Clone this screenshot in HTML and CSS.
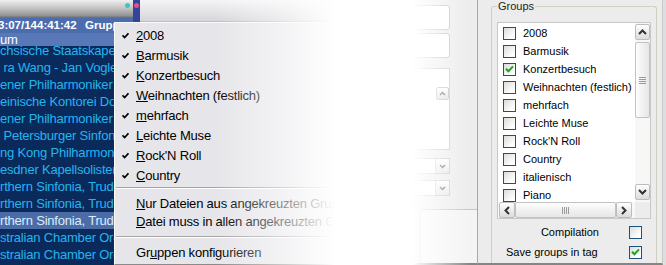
FILE: index.html
```html
<!DOCTYPE html>
<html lang="de">
<head>
    <meta charset="UTF-8">
    <title>Gruppen</title>
    <link rel="stylesheet" href="styles.css">
</head>
<body>
    <!-- Player playlist (left) -->
    <div class="player">
        <div class="player-main">
            <div class="titlebar"><span class="led led-cyan"></span></div>
            <div class="col-head"><span class="col-time">3:07/144:41:42</span><span>Gruppe</span></div>
            <div class="row-current">um</div>
            <ul class="tracks">
                <li>chsische Staatskapelle Dresden</li>
                <li>&nbsp;ra Wang - Jan Vogler</li>
                <li>ener Philharmoniker</li>
                <li>einische Kontorei Dormagen</li>
                <li>ener Philharmoniker</li>
                <li>&nbsp;Petersburger Sinfonieorchester</li>
                <li>ng Kong Philharmonic</li>
                <li>esdner Kapellsolisten</li>
                <li>rthern Sinfonia, Trude</li>
                <li>rthern Sinfonia, Trude</li>
                <li class="selected">rthern Sinfonia, Trude</li>
                <li>stralian Chamber Orchestra</li>
                <li>stralian Chamber Orchestra</li>
            </ul>
        </div>
        <div class="player-edge"><span class="led led-pink"></span></div>
    </div>

    <div class="canvas">
        <div class="toolbar"></div>
        <div class="canvas-body"></div>
    </div>

    <!-- Tag editor controls behind the fade -->
    <div class="controls">
        <div class="field"></div>
        <div class="field"></div>
        <div class="faint-list">
            <div class="faint-scroll">
                <span class="scroll-btn small">
                    <svg width="7" height="5" viewBox="0 0 7 5"><path d="M1 4 3.5 1.5 6 4" fill="none" stroke="#666" stroke-width="1.5"/></svg>
                </span>
            </div>
        </div>
        <div class="combo"><span class="combo-btn"><svg width="7" height="5" viewBox="0 0 7 5"><path d="M1 1 3.5 3.5 6 1" fill="none" stroke="#666" stroke-width="1.5"/></svg></span></div>
        <div class="combo"><span class="combo-btn"><svg width="7" height="5" viewBox="0 0 7 5"><path d="M1 1 3.5 3.5 6 1" fill="none" stroke="#666" stroke-width="1.5"/></svg></span></div>
        <div class="faint-panel"></div>
    </div>

    <div class="settings">
        <fieldset class="groups">
            <legend>Groups</legend>
            <div class="listbox">
                <ul class="group-list">
                    <li><span class="checkbox"></span>2008</li>
                    <li><span class="checkbox"></span>Barmusik</li>
                    <li><span class="checkbox checked"><svg width="9" height="8" viewBox="0 0 9 8"><path d="M1 3.8 3.4 6.2 8 1.4" fill="none" stroke="#21a121" stroke-width="2"/></svg></span>Konzertbesuch</li>
                    <li><span class="checkbox"></span>Weihnachten (festlich)</li>
                    <li><span class="checkbox"></span>mehrfach</li>
                    <li><span class="checkbox"></span>Leichte Muse</li>
                    <li><span class="checkbox"></span>Rock'N Roll</li>
                    <li><span class="checkbox"></span>Country</li>
                    <li><span class="checkbox"></span>italienisch</li>
                    <li><span class="checkbox"></span>Piano</li>
                </ul>
                <div class="vscroll">
                    <span class="scroll-btn">
                        <svg width="9" height="6" viewBox="0 0 9 6"><path d="M1 5 4.5 1.5 8 5" fill="none" stroke="#333" stroke-width="2"/></svg>
                    </span>
                    <div class="vtrack">
                        <div class="thumb thumb-v"><span class="grip-v"></span></div>
                    </div>
                    <span class="scroll-btn">
                        <svg width="9" height="6" viewBox="0 0 9 6"><path d="M1 1 4.5 4.5 8 1" fill="none" stroke="#333" stroke-width="2"/></svg>
                    </span>
                </div>
                <div class="hscroll">
                    <span class="scroll-btn">
                        <svg width="6" height="9" viewBox="0 0 6 9"><path d="M5 1 1.5 4.5 5 8" fill="none" stroke="#333" stroke-width="2"/></svg>
                    </span>
                    <div class="thumb thumb-h"><span class="grip-h"></span></div>
                    <span class="scroll-btn">
                        <svg width="6" height="9" viewBox="0 0 6 9"><path d="M1 1 4.5 4.5 1 8" fill="none" stroke="#333" stroke-width="2"/></svg>
                    </span>
                </div>
                <div class="corner"></div>
            </div>
            <div class="option option-right">Compilation<span class="checkbox"></span></div>
            <div class="option">Save groups in tag<span class="checkbox checked push"><svg width="9" height="8" viewBox="0 0 9 8"><path d="M1 3.8 3.4 6.2 8 1.4" fill="none" stroke="#21a121" stroke-width="2"/></svg></span></div>
        </fieldset>
    </div>

    <!-- Context menu over the playlist -->
    <div class="menu">
        <div class="menu-item"><span class="check"><svg width="7" height="7" viewBox="0 0 7 7"><path d="M0.5 3.2 2.6 5.5 6.5 1.2" fill="none" stroke="#000" stroke-width="1.7"/></svg></span><span><u>2</u>008</span></div>
        <div class="menu-item"><span class="check"><svg width="7" height="7" viewBox="0 0 7 7"><path d="M0.5 3.2 2.6 5.5 6.5 1.2" fill="none" stroke="#000" stroke-width="1.7"/></svg></span><span><u>B</u>armusik</span></div>
        <div class="menu-item"><span class="check"><svg width="7" height="7" viewBox="0 0 7 7"><path d="M0.5 3.2 2.6 5.5 6.5 1.2" fill="none" stroke="#000" stroke-width="1.7"/></svg></span><span><u>K</u>onzertbesuch</span></div>
        <div class="menu-item"><span class="check"><svg width="7" height="7" viewBox="0 0 7 7"><path d="M0.5 3.2 2.6 5.5 6.5 1.2" fill="none" stroke="#000" stroke-width="1.7"/></svg></span><span><u>W</u>eihnachten (festlich)</span></div>
        <div class="menu-item"><span class="check"><svg width="7" height="7" viewBox="0 0 7 7"><path d="M0.5 3.2 2.6 5.5 6.5 1.2" fill="none" stroke="#000" stroke-width="1.7"/></svg></span><span><u>m</u>ehrfach</span></div>
        <div class="menu-item"><span class="check"><svg width="7" height="7" viewBox="0 0 7 7"><path d="M0.5 3.2 2.6 5.5 6.5 1.2" fill="none" stroke="#000" stroke-width="1.7"/></svg></span><span><u>L</u>eichte Muse</span></div>
        <div class="menu-item"><span class="check"><svg width="7" height="7" viewBox="0 0 7 7"><path d="M0.5 3.2 2.6 5.5 6.5 1.2" fill="none" stroke="#000" stroke-width="1.7"/></svg></span><span><u>R</u>ock'N Roll</span></div>
        <div class="menu-item"><span class="check"><svg width="7" height="7" viewBox="0 0 7 7"><path d="M0.5 3.2 2.6 5.5 6.5 1.2" fill="none" stroke="#000" stroke-width="1.7"/></svg></span><span><u>C</u>ountry</span></div>
        <div class="menu-sep"></div>
        <div class="menu-item plain"><span class="check"></span><span><u>N</u>ur Dateien aus angekreuzten Gruppen anzeigen</span></div>
        <div class="menu-item plain"><span class="check"></span><span><u>D</u>atei muss in allen angekreuzten Gruppen sein</span></div>
        <div class="menu-sep wide"></div>
        <div class="menu-item plain"><span class="check"></span><span>Gr<u>u</u>ppen konfigurieren</span></div>
    </div>

    <div class="fade"></div>
</body>
</html>
```

FILE: styles.css
```css
body {
    margin: 0;
    width: 666px;
    height: 265px;
    overflow: hidden;
    position: relative;
    display: flex;
    background-color: #dedede;
    font-family: "Liberation Sans", Arial, sans-serif;
}

/* Playlist */
.player {
    width: 140px;
    display: flex;
    flex-shrink: 0;
}

.player-main {
    width: 133px;
    display: flex;
    flex-direction: column;
    background-color: #0b2a5c;
    overflow: hidden;
}

.player-edge {
    width: 7px;
    background-color: #34449a;
    display: flex;
    justify-content: center;
    align-items: flex-start;
    padding-top: 3px;
    box-sizing: border-box;
}

.titlebar {
    height: 18px;
    flex-shrink: 0;
    display: flex;
    justify-content: flex-end;
    align-items: flex-start;
    padding: 3px 3px 0 0;
    box-sizing: border-box;
    background: linear-gradient(#efefef, #c4c4c4 45%, #959595 85%, #6a6a6a);
}

.led {
    width: 5px;
    height: 5px;
    border-radius: 50%;
}

.led-cyan {
    background-color: #3cc6c8;
}

.led-pink {
    background-color: #e0508a;
}

.col-head {
    height: 15px;
    flex-shrink: 0;
    display: flex;
    background-color: #4b6db0;
    color: #fff;
    font-size: 11.5px;
    font-weight: bold;
    line-height: 15px;
    white-space: nowrap;
}

.col-time {
    width: 87px;
    margin-left: -2px;
    flex-shrink: 0;
}

.row-current {
    height: 13px;
    flex-shrink: 0;
    background-color: #5878b8;
    color: #fff;
    font-size: 13px;
    line-height: 13px;
    letter-spacing: -0.2px;
}

.tracks {
    list-style: none;
    margin: 0;
    padding: 0;
    flex: 1;
    overflow: hidden;
}

.tracks li {
    height: 17px;
    line-height: 17px;
    font-size: 13px;
    letter-spacing: -0.2px;
    white-space: nowrap;
    color: #24b4ee;
}

.tracks li:first-child {
    margin-top: -4px;
}

.tracks li.selected {
    background-color: #4c6ca8;
    color: #d8eefa;
}

/* Area under the menu */
.canvas {
    flex: 1;
    display: flex;
    flex-direction: column;
}

.toolbar {
    height: 22px;
    box-sizing: border-box;
    background: linear-gradient(#f4f4f6, #e2e2e6 60%, #d6d6da);
    border-bottom: 1px solid #bdbdc2;
}

.canvas-body {
    flex: 1;
    background-color: #fff;
}

/* Faded controls column */
.controls {
    width: 78px;
    flex-shrink: 0;
    box-sizing: border-box;
    display: flex;
    flex-direction: column;
    padding-top: 5px;
    background-color: #ececec;
    border-right: 1px solid #a8a8a8;
    border-bottom: 2px solid #858585;
}

.field {
    height: 25px;
    margin: 0 27px 3px 0;
    box-sizing: border-box;
    border: 1px solid #b4c3d6;
    border-radius: 3px;
    background-color: #fff;
}

.faint-list {
    height: 82px;
    margin: 7px 27px 0 0;
    box-sizing: border-box;
    border: 1px solid #c9c9c9;
    background-color: #fff;
    display: flex;
    justify-content: flex-end;
}

.faint-scroll {
    width: 13px;
    display: flex;
    flex-direction: column;
    padding-top: 18px;
    box-sizing: border-box;
}

.combo {
    height: 16px;
    margin: 8px 27px 0 0;
    box-sizing: border-box;
    border: 1px solid #c9c9c9;
    background-color: #fff;
    display: flex;
    justify-content: flex-end;
}

.combo + .combo {
    margin-top: 6px;
}

.combo-btn {
    width: 13px;
    display: flex;
    align-items: center;
    justify-content: center;
    background: linear-gradient(#fdfdfd, #e4e4e4);
    border-left: 1px solid #d4d4d4;
}

.faint-panel {
    margin-top: auto;
    margin-left: 20px;
    height: 53px;
    border-top: 1px solid #c6c6c6;
    border-left: 1px solid #c6c6c6;
    background-color: #f4f4f4;
}

/* Settings panel */
.settings {
    width: 185px;
    flex-shrink: 0;
    margin-right: 3px;
    box-sizing: border-box;
    padding: 0 5px 0 13px;
    background-color: #ececec;
    border-right: 1px solid #c9c9c9;
    border-bottom: 2px solid #858585;
    overflow: hidden;
    font-size: 11px;
    color: #000;
}

.groups {
    margin: 0;
    padding: 0 5px;
    border: 1px solid #d0d0bf;
    border-bottom: none;
    border-radius: 3px 3px 0 0;
    height: 280px;
}

.groups legend {
    padding: 0 1px;
    font-size: 11px;
    line-height: 13px;
    color: #222;
}

.listbox {
    height: 197px;
    margin-top: 9px;
    box-sizing: border-box;
    border: 1px solid #c8c8c8;
    background-color: #fff;
    display: grid;
    grid-template-columns: 1fr 15px;
    grid-template-rows: 1fr 16px;
}

.group-list {
    list-style: none;
    margin: 0;
    padding: 1px 0 0 5px;
    overflow: hidden;
}

.group-list li {
    height: 18px;
    display: flex;
    align-items: center;
    gap: 7px;
    white-space: nowrap;
}

.checkbox {
    width: 13px;
    height: 13px;
    flex-shrink: 0;
    box-sizing: border-box;
    border: 1px solid #1c5180;
    background: linear-gradient(135deg, #dcdcd7, #fff 80%);
    display: flex;
    align-items: center;
    justify-content: center;
}

.vscroll {
    display: flex;
    flex-direction: column;
    padding: 1px 0 2px;
    background-color: #f7f7f5;
}

.vtrack {
    flex: 1;
    padding-top: 2px;
}

.scroll-btn {
    height: 16px;
    min-width: 15px;
    box-sizing: border-box;
    display: flex;
    align-items: center;
    justify-content: center;
    border: 1px solid #bdbdbd;
    border-radius: 2px;
    background: linear-gradient(#fefefe, #dcdcdc);
}

.scroll-btn.small {
    height: 13px;
    min-width: 13px;
}

.thumb {
    box-sizing: border-box;
    border: 1px solid #c2c2c2;
    border-radius: 2px;
    display: flex;
    align-items: center;
    justify-content: center;
}

.thumb-v {
    height: 76px;
    background: linear-gradient(to right, #fdfdfd, #e6e6e6);
}

.thumb-h {
    flex: 1;
    background: linear-gradient(#fdfdfd, #e6e6e6);
}

.grip-v {
    width: 7px;
    height: 7px;
    background: repeating-linear-gradient(#9a9a9a 0 1px, transparent 1px 2px);
}

.grip-h {
    width: 7px;
    height: 7px;
    background: repeating-linear-gradient(to right, #9a9a9a 0 1px, transparent 1px 2px);
}

.hscroll {
    display: flex;
    padding: 0 3px 0 1px;
    background-color: #f7f7f5;
}

.hscroll .scroll-btn {
    width: 16px;
    height: 16px;
}

.corner {
    background-color: #ececec;
}

.option {
    height: 20px;
    display: flex;
    align-items: center;
    padding: 0 9px;
    white-space: nowrap;
}

.option-right {
    margin-top: 3px;
    justify-content: flex-end;
    gap: 30px;
}

.push {
    margin-left: auto;
}

/* Context menu */
.menu {
    position: absolute;
    left: 114px;
    top: 22px;
    width: 240px;
    height: 243px;
    box-sizing: border-box;
    padding-top: 2px;
    background-color: #e6e6ea;
    border: 1px solid;
    border-color: #fafafa #8a8a8a #8a8a8a #fafafa;
    font-size: 13px;
    letter-spacing: -0.2px;
    color: #000;
}

.menu-item {
    height: 20px;
    display: flex;
    align-items: center;
    white-space: nowrap;
}

.menu-item.plain {
    height: 18px;
}

.check {
    width: 21px;
    flex-shrink: 0;
    box-sizing: border-box;
    padding-left: 7px;
    display: flex;
    align-items: center;
}

.menu-sep {
    height: 1px;
    margin: 2px 1px 5px 1px;
    background-color: #a4a4a4;
    border-bottom: 1px solid #fff;
}

.menu-sep.wide {
    margin-top: 6px;
}

/* White fade laid over the middle of the shot */
.fade {
    position: absolute;
    inset: 0;
    pointer-events: none;
    background: linear-gradient(to right,
        rgba(255, 255, 255, 0) 215px,
        rgba(255, 255, 255, 0.55) 285px,
        #fff 335px,
        #fff 412px,
        rgba(255, 255, 255, 0) 470px);
}
```
